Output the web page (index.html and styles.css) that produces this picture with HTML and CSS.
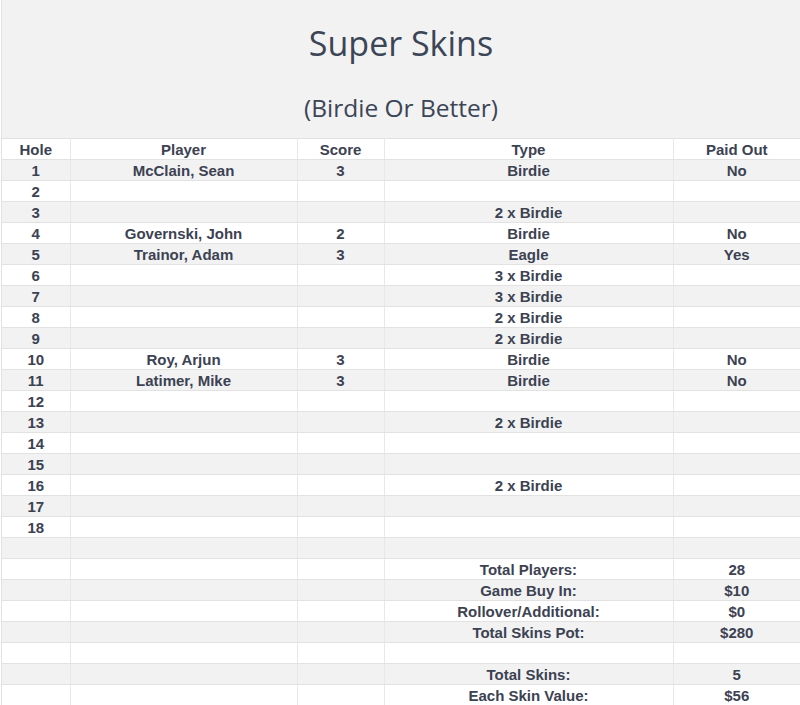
FILE: index.html
```html
<!DOCTYPE html>
<html>
<head>
<meta charset="utf-8">
<link rel="stylesheet" href="styles.css">
</head>
<body>
<div class="page">
  <header class="banner">
    <h1 class="title">Super Skins</h1>
    <h2 class="subtitle">(Birdie Or Better)</h2>
  </header>
  <table class="skins">
    <colgroup>
      <col class="c-hole"><col class="c-player"><col class="c-score"><col class="c-type"><col class="c-paid">
    </colgroup>
    <thead>
      <tr><th>Hole</th><th>Player</th><th>Score</th><th>Type</th><th>Paid Out</th></tr>
    </thead>
    <tbody>
      <tr><td>1</td><td>McClain, Sean</td><td>3</td><td>Birdie</td><td>No</td></tr>
      <tr><td>2</td><td></td><td></td><td></td><td></td></tr>
      <tr><td>3</td><td></td><td></td><td>2 x Birdie</td><td></td></tr>
      <tr><td>4</td><td>Governski, John</td><td>2</td><td>Birdie</td><td>No</td></tr>
      <tr><td>5</td><td>Trainor, Adam</td><td>3</td><td>Eagle</td><td>Yes</td></tr>
      <tr><td>6</td><td></td><td></td><td>3 x Birdie</td><td></td></tr>
      <tr><td>7</td><td></td><td></td><td>3 x Birdie</td><td></td></tr>
      <tr><td>8</td><td></td><td></td><td>2 x Birdie</td><td></td></tr>
      <tr><td>9</td><td></td><td></td><td>2 x Birdie</td><td></td></tr>
      <tr><td>10</td><td>Roy, Arjun</td><td>3</td><td>Birdie</td><td>No</td></tr>
      <tr><td>11</td><td>Latimer, Mike</td><td>3</td><td>Birdie</td><td>No</td></tr>
      <tr><td>12</td><td></td><td></td><td></td><td></td></tr>
      <tr><td>13</td><td></td><td></td><td>2 x Birdie</td><td></td></tr>
      <tr><td>14</td><td></td><td></td><td></td><td></td></tr>
      <tr><td>15</td><td></td><td></td><td></td><td></td></tr>
      <tr><td>16</td><td></td><td></td><td>2 x Birdie</td><td></td></tr>
      <tr><td>17</td><td></td><td></td><td></td><td></td></tr>
      <tr><td>18</td><td></td><td></td><td></td><td></td></tr>
      <tr><td></td><td></td><td></td><td></td><td></td></tr>
      <tr><td></td><td></td><td></td><td>Total Players:</td><td>28</td></tr>
      <tr><td></td><td></td><td></td><td>Game Buy In:</td><td>$10</td></tr>
      <tr><td></td><td></td><td></td><td>Rollover/Additional:</td><td>$0</td></tr>
      <tr><td></td><td></td><td></td><td>Total Skins Pot:</td><td>$280</td></tr>
      <tr><td></td><td></td><td></td><td></td><td></td></tr>
      <tr><td></td><td></td><td></td><td>Total Skins:</td><td>5</td></tr>
      <tr><td></td><td></td><td></td><td>Each Skin Value:</td><td>$56</td></tr>
    </tbody>
  </table>
</div>
</body>
</html>
```

FILE: styles.css
```css
html, body {
  margin: 0;
  padding: 0;
  background: #ffffff;
}

.page {
  margin-left: 1px;
  border-left: 1px solid #e2e2e2;
  width: 799px;
  box-sizing: border-box;
}

.banner {
  background: #f2f2f2;
  padding: 23px 0 15px;
  text-align: center;
  color: #3b4556;
  font-family: "Open Sans", "Noto Sans", sans-serif;
  font-weight: 400;
}

.title {
  margin: 0;
  font-size: 34px;
  line-height: 40px;
  font-weight: 400;
}

.subtitle {
  margin: 30px 0 0;
  font-size: 24.5px;
  line-height: 30px;
  font-weight: 400;
}

.skins {
  width: 100%;
  border-collapse: collapse;
  table-layout: fixed;
  font-family: "Liberation Sans", Arial, sans-serif;
  font-weight: 700;
  font-size: 15px;
  color: #3c4252;
  border-top: 1px solid #e0e0e0;
}

.c-hole { width: 68px; }
.c-player { width: 227px; }
.c-score { width: 87px; }
.c-type { width: 289px; }
.c-paid { width: 127px; }

.skins th,
.skins td {
  padding: 2px 0 0;
  height: 18px;
  line-height: 18px;
  text-align: center;
  font-weight: 700;
  white-space: nowrap;
  border-left: 1px solid #e8e8e8;
  border-bottom: 1px solid #e2e2e2;
}

.skins th:first-child,
.skins td:first-child {
  border-left: none;
}

.skins thead th {
  background: #ffffff;
}

.skins tbody tr:nth-child(odd) td {
  background: #f2f2f2;
}

.skins tbody tr:nth-child(even) td {
  background: #ffffff;
}
```
